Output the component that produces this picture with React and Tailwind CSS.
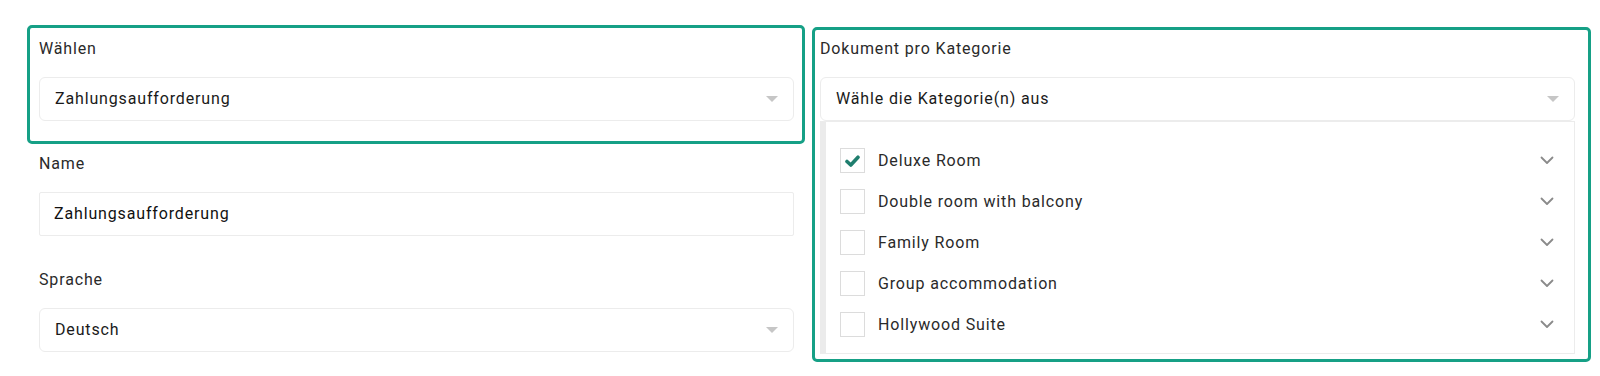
import React from 'react';

const categories = [
    { name: 'Deluxe Room', checked: true },
    { name: 'Double room with balcony', checked: false },
    { name: 'Family Room', checked: false },
    { name: 'Group accommodation', checked: false },
    { name: 'Hollywood Suite', checked: false },
];

const Caret = () => (
    <svg width="12" height="6" viewBox="0 0 12 6" className="shrink-0">
        <path d="M0 0 L12 0 L6 6 Z" fill="#c6c6c6" />
    </svg>
);

const Chevron = () => (
    <svg width="14" height="9" viewBox="0 0 14 9" className="shrink-0">
        <path d="M1.5 1.5 L7 7 L12.5 1.5" fill="none" stroke="#8a8a8a" strokeWidth="1.8" strokeLinecap="round" strokeLinejoin="round" />
    </svg>
);

const SelectBox = ({ value }) => (
    <div className="flex items-center justify-between h-[44px] pl-[15px] pr-[15px] bg-white border border-[#ececec] rounded-[6px]">
        <span className="text-[#1a1a1a]">{value}</span>
        <Caret />
    </div>
);

const Label = ({ children }) => (
    <div className="h-6 leading-6 text-[#2a2a2a]">{children}</div>
);

export default function App() {
    return (
        <div
            className="w-[1600px] h-[376px] bg-white flex items-start pl-[27px] pt-[25px] text-[16px] tracking-[0.85px] antialiased"
            style={{ fontFamily: 'Roboto, "Liberation Sans", sans-serif' }}
        >
            {/* Left column */}
            <div className="w-[778px] flex flex-col">
                <div className="border-[3px] border-[#16a086] rounded-[5px] pl-[9px] pr-[8px] pt-[9px] pb-[20px]">
                    <Label>Wählen</Label>
                    <div className="mt-4">
                        <SelectBox value="Zahlungsaufforderung" />
                    </div>
                </div>

                <div className="pl-[12px] pr-[11px] pt-[8px]">
                    <Label>Name</Label>
                    <div className="mt-4 h-[44px] flex items-center pl-[14px] border border-[#ececec] rounded-[2px] text-[#111]">
                        Zahlungsaufforderung
                    </div>

                    <div className="mt-8">
                        <Label>Sprache</Label>
                    </div>
                    <div className="mt-4">
                        <SelectBox value="Deutsch" />
                    </div>
                </div>
            </div>

            {/* Right column */}
            <div className="ml-[7px] mt-[2px] w-[779px] border-[3px] border-[#16a086] rounded-[5px] pl-[5px] pr-[13px] pt-[7px] pb-[5px]">
                <Label>Dokument pro Kategorie</Label>
                <div className="mt-4">
                    <SelectBox value="Wähle die Kategorie(n) aus" />
                </div>
                <div className="h-[233px] bg-white border border-[#ececec] border-l-[6px] border-l-[#ebebeb] pl-[14px] pr-[20px] pt-[18px]">
                    {categories.map((c) => (
                        <div key={c.name} className="h-[41px] flex items-center">
                            <div className="w-[25px] h-[25px] border border-[#dcdcdc] flex items-center justify-center shrink-0">
                                {c.checked && (
                                    <svg width="15" height="12" viewBox="0 0 15 12">
                                        <path d="M2 6.5 L5.8 10 L13 2.2" fill="none" stroke="#1f7e6e" strokeWidth="3.6" strokeLinecap="round" strokeLinejoin="round" />
                                    </svg>
                                )}
                            </div>
                            <span className="ml-[13px] flex-1 text-[#2a2a2a]">{c.name}</span>
                            <Chevron />
                        </div>
                    ))}
                </div>
            </div>
        </div>
    );
}
